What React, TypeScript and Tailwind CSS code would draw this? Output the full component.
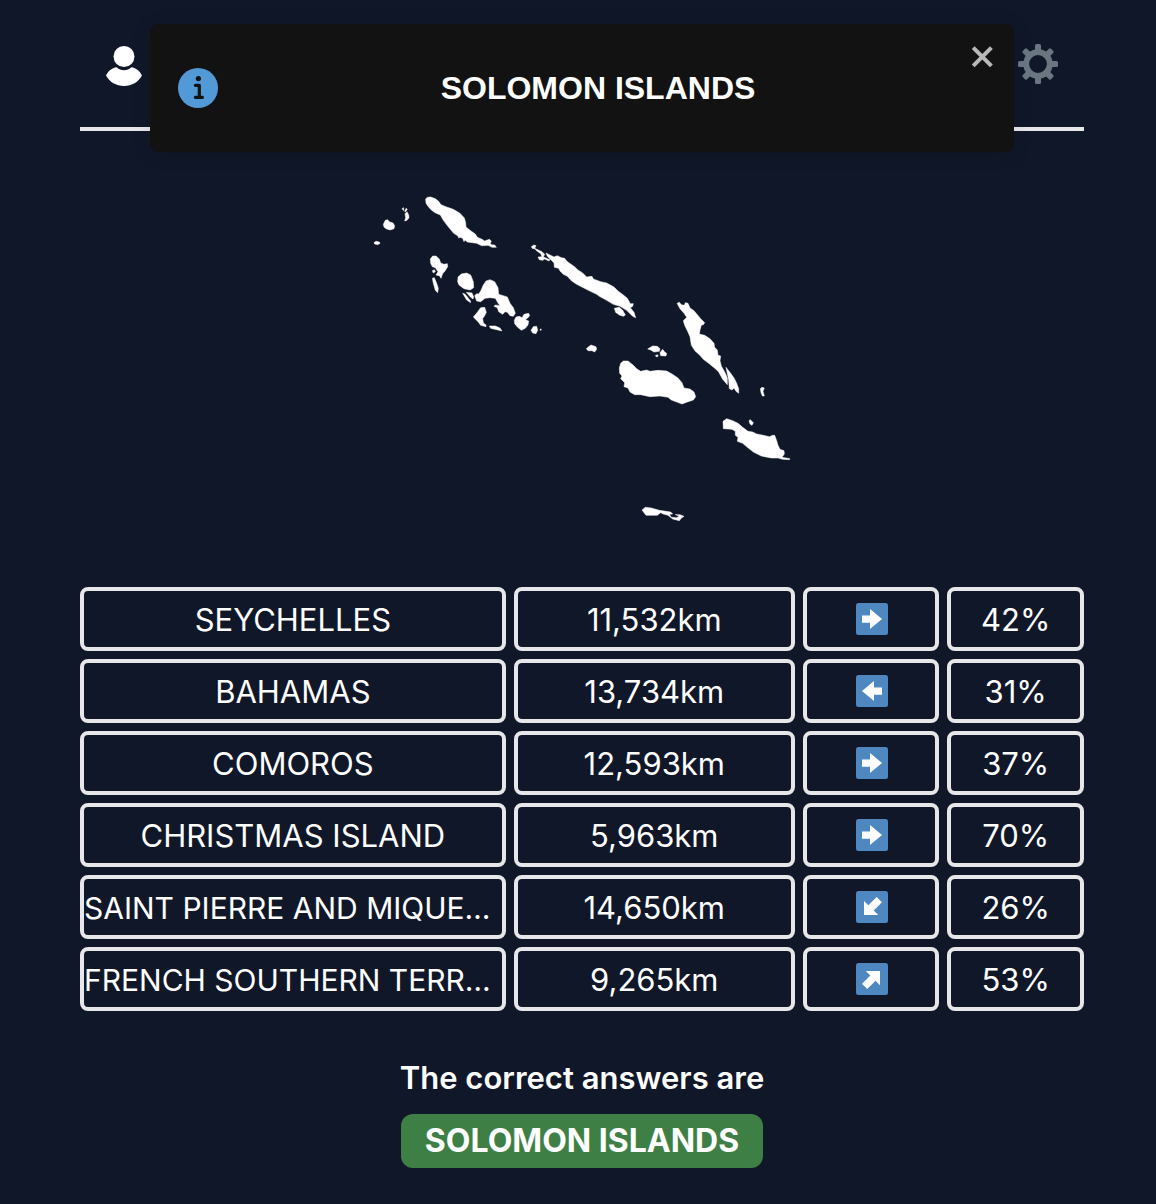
type Direction = 'right' | 'left' | 'down-left' | 'up-right';

interface Guess {
  name: string;
  distance: string;
  direction: Direction;
  proximity: string;
}

const guesses: Guess[] = [
  { name: 'SEYCHELLES', distance: '11,532km', direction: 'right', proximity: '42%' },
  { name: 'BAHAMAS', distance: '13,734km', direction: 'left', proximity: '31%' },
  { name: 'COMOROS', distance: '12,593km', direction: 'right', proximity: '37%' },
  { name: 'CHRISTMAS ISLAND', distance: '5,963km', direction: 'right', proximity: '70%' },
  { name: 'SAINT PIERRE AND MIQUE…', distance: '14,650km', direction: 'down-left', proximity: '26%' },
  { name: 'FRENCH SOUTHERN TERR…', distance: '9,265km', direction: 'up-right', proximity: '53%' },
];

const arrowPaths: Record<Direction, string> = {
  right: 'M6 12.5H14V6L26 16L14 26V19.8H6Z',
  left: 'M26 12.5H18V6L6 16L18 26V19.8H26Z',
  'down-left': 'M8 10L12.3 14.3L20.7 6L26 11.2L17.7 19.6L22.2 24H8Z',
  'up-right': 'M24 22.2L19.6 17.7L11.2 26L6 20.8L14.3 12.4L9.8 8H24Z',
};

function ArrowTile({ direction }: { direction: Direction }) {
  return (
    <svg viewBox="0 0 32 32" className="size-8" role="img" aria-label={direction}>
      <rect width="32" height="32" rx="2.5" fill="#4f87c0" />
      <path d={arrowPaths[direction]} fill="#fff" />
    </svg>
  );
}

function UserIcon() {
  return (
    <svg viewBox="0 0 40 40" className="size-10" fill="#fff" aria-hidden="true">
      <circle cx="20" cy="10.5" r="10.5" />
      <path d="M12.6 21.2C14.6 23.2 17.1 24.2 20 24.2S25.4 23.2 27.4 21.2C32 21.7 36 25 38 29.6C34.6 36.1 27.8 40 20 40S5.4 36.1 2 29.6C4 25 8 21.7 12.6 21.2Z" />
    </svg>
  );
}

const teeth = [0, 45, 90, 135, 180, 225, 270, 315];

function GearIcon() {
  return (
    <svg viewBox="0 0 40 40" className="size-10" aria-hidden="true">
      <circle cx="20" cy="20" r="11.8" fill="none" stroke="#6b7780" strokeWidth="5.8" />
      {teeth.map((angle) => (
        <rect key={angle} x="17" y="0" width="6" height="8" rx="1.5" fill="#6b7780" transform={`rotate(${angle} 20 20)`} />
      ))}
    </svg>
  );
}

function InfoIcon() {
  return (
    <svg viewBox="0 0 40 40" className="size-10" aria-hidden="true">
      <circle cx="20" cy="20" r="20" fill="#5299d8" />
      <circle cx="20.4" cy="10.6" r="2.6" fill="#121212" />
      <path d="M17.4 17.3H21.3V29.3M17.4 29.3H24.4" fill="none" stroke="#121212" strokeWidth="3.2" strokeLinecap="round" strokeLinejoin="round" />
    </svg>
  );
}

function Toast() {
  return (
    <div
      role="status"
      className="absolute inset-x-[70px] top-6 flex h-32 items-center rounded-lg bg-[#121212] px-7 shadow-[0_2px_20px_rgba(0,0,0,0.1)]"
    >
      <InfoIcon />
      <p className="flex-1 pr-6 pl-4 text-center font-['Liberation_Sans',Arial,sans-serif] text-[32px] leading-10 font-bold">
        SOLOMON ISLANDS
      </p>
      <button type="button" aria-label="Close" className="absolute top-4 right-4 p-1">
        <svg viewBox="0 0 24 24" className="size-6" fill="none" stroke="#b9b9b9" strokeWidth="4">
          <path d="M3.2 3.6L21.4 21.8M21.4 3.6L3.2 21.8" />
        </svg>
      </button>
    </div>
  );
}

function IslandsMap() {
  return (
    <svg viewBox="0 0 1260 990" className="w-[420px] max-w-full" fill="#fff" role="img" aria-label="Country outline">
      <g transform="translate(-36 -30)" stroke="#fff" strokeWidth="1.5">
        <path d="M197 42L202 37L212 36L226 41L236 49L243 59L260 66L280 73L300 85L313 99L317 113L318 126L330 136L346 147L352 157L366 163L374 168L388 163L394 168L391 175L394 179L404 180L409 187L396 187L384 181L365 182L350 175L322 171L315 165L312 170L308 160L300 157L296 159L294 153L281 145L266 127L250 106L241 90L225 83L214 75L205 65L198 55Z" />
        <path d="M70 118L76 106L83 104L88 110L99 114L104 122L102 131L90 135L78 131L72 126Z" />
        <path d="M42 173L48 169L58 171L60 175L53 179L44 177Z" />
        <path d="M135 86L141 80L146 90L147 98L141 106L134 108L137 98ZM126 71L131 68V77ZM138 70L142 73L136 81L134 79Z" />
        <path d="M211 222L218 213L228 213L238 222L242 234L252 238L262 236L263 245L255 258L248 266L243 280L238 272L228 270L234 260L226 248L217 245L212 235ZM217 257L223 254L226 260L220 264ZM217 280L223 278L230 295L235 310L233 323L226 316L220 295Z" />
        <path d="M293 290L294 276L304 267L320 264L332 270L340 290L341 308L330 315L312 311L297 300Z" />
        <path d="M308 325L315 327L331 347L332 353L320 345ZM319 322L336 324L341 336L339 342L331 336Z" />
      </g>
      <g transform="translate(234 120)" stroke="#fff" strokeWidth="1.5">
        <path d="M74 182L80 176L86 177L92 168L100 150L108 138L120 134L134 140L144 158L146 178L160 182L172 186L180 205L190 218L196 235L190 244L180 242L172 232L165 230L158 238L146 230L142 218L132 214L136 210L150 212L144 204L136 190L120 188L105 190L92 200L80 198Z" />
        <path d="M70 246L82 232L92 218L104 217L109 232L103 244L98 250L100 264L108 270L108 275L92 271L84 260ZM118 273L136 273L150 279L156 288L140 284L122 280Z" />
        <path d="M193 256L198 246L208 244L216 248L222 238L236 235L239 242L232 250L226 254L236 258L234 270L226 280L214 286L202 276L194 266ZM243 286L250 275L260 274L263 286L258 296L248 294Z" />
        <circle cx="272" cy="284" r="2" />
        <path d="M244 35L252 30L258 32L254 40L276 50L284 58L280 66L300 74L297 78L284 72L278 76L268 74L264 66L276 65L272 56L258 46L254 41L248 41Z" />
        <path d="M288 54L300 60L312 66L322 62L334 68L344 70L352 80L372 94L384 105L398 114L410 126L426 124L430 132L452 140L470 144L492 156L504 168L520 180L532 190L541 206L550 206L548 214L541 218L552 232L557 248L548 244L530 226L510 214L490 208L470 196L448 184L440 178L415 166L400 158L380 148L365 138L352 124L340 118L330 108L326 100L313 97L312 84L304 76L292 64Z" />
        <path d="M493 220L508 217L518 226L526 240L520 244L508 240L497 232Z" />
      </g>
      <g transform="translate(594 285)" stroke="#fff" strokeWidth="1.5">
        <path d="M321 40L328 37L334 44L343 46L346 38L354 40L360 54L372 62L382 74L392 86L404 98L400 104L394 106L390 120L388 132L404 136L420 146L432 160L434 172L442 180L444 196L452 198L450 212L454 228L466 250L472 264L472 284L458 268L446 246L436 236L416 220L400 208L388 194L376 184L364 166L360 140L352 122L344 106L340 92L350 82L342 70L330 56Z" />
        <path d="M468 232L482 250L492 264L500 280L506 296L506 310L498 304L492 294L486 300L478 296L476 270Z" />
        <path d="M148 234L152 220L160 213L174 213L190 226L200 236L212 244L230 240L240 244L264 241L290 243L306 252L324 264L336 278L342 294L360 297L372 306L377 320L370 330L352 336L336 342L320 336L304 330L294 322L270 318L240 320L212 314L194 314L180 306L174 294L162 290L164 278L152 266L156 258L149 250Z" />
        <path d="M49 176L56 170L63 165L78 170L80 178L74 186L66 182L54 182ZM233 177L248 168L262 169L270 176L268 184L252 186L242 180ZM270 188L278 178L284 186L290 190L288 198L272 197ZM256 197L262 194L265 198L260 201Z" />
        <path d="M571 296L576 292L583 294L579 304L583 318L577 318L573 308Z" />
      </g>
      <g transform="translate(714 615)" stroke="#fff" strokeWidth="1.5">
        <path d="M339 64L350 56L368 62L384 70L398 82L414 94L428 96L440 102L460 106L478 110L488 106L494 106L500 122L504 136L510 148L522 152L523 162L516 172L540 176L538 179L518 178L504 174L484 174L454 168L430 156L412 142L398 130L382 124L384 112L376 106L376 94L366 88L340 86Z" />
        <path d="M417 62L421 59L430 68L426 76L420 72Z" />
        <path d="M96 330L106 322L124 324L148 331L182 336L188 342L178 343L184 352L200 353L208 348L196 344L210 344L222 349L214 354L208 362L188 357L174 346L160 342L152 338L142 346L108 346Z" />
      </g>
    </svg>
  );
}

function GuessRow({ guess }: { guess: Guess }) {
  const shortened = guess.name.endsWith('…');

  return (
    <tr className="grid grid-cols-7 gap-2 text-center">
      <td
        className={`col-span-3 h-16 rounded-lg border-4 border-[#e7e7ea] leading-[58px] whitespace-nowrap ${
          shortened ? 'text-left text-[30px]' : 'text-center'
        }`}
      >
        {guess.name}
      </td>
      <td className="col-span-2 h-16 rounded-lg border-4 border-[#e7e7ea] leading-[58px]">{guess.distance}</td>
      <td className="flex h-16 items-center justify-center rounded-lg border-4 border-[#e7e7ea] pl-0.5">
        <ArrowTile direction={guess.direction} />
      </td>
      <td className="h-16 rounded-lg border-4 border-[#e7e7ea] leading-[58px]">{guess.proximity}</td>
    </tr>
  );
}

export default function App() {
  return (
    <div className="min-h-screen bg-[#101728] pr-[72px] pb-9 pl-20 font-[Inter,sans-serif] text-[31px] text-white">
      <div className="relative">
        <header className="flex h-[131px] items-start justify-between border-b-4 border-[#e7e7ea] pt-11 pr-[26px] pl-6">
          <button type="button" aria-label="Profile" className="mt-0.5">
            <UserIcon />
          </button>
          <button type="button" aria-label="Settings">
            <GearIcon />
          </button>
        </header>
        <Toast />
      </div>

      <main className="flex flex-col items-center">
        <div className="flex w-full justify-center pt-16 pb-[62px]">
          <IslandsMap />
        </div>

        <table className="block w-full">
          <tbody className="flex flex-col gap-2">
            {guesses.map((guess) => (
              <GuessRow key={guess.name} guess={guess} />
            ))}
          </tbody>
        </table>

        <h2 className="mt-11 leading-[46px] font-semibold">The correct answers are</h2>
        <p className="mt-[13px] rounded-xl bg-[#3e7f46] px-6 text-[32px] leading-[54px] font-bold">SOLOMON ISLANDS</p>
      </main>
    </div>
  );
}
